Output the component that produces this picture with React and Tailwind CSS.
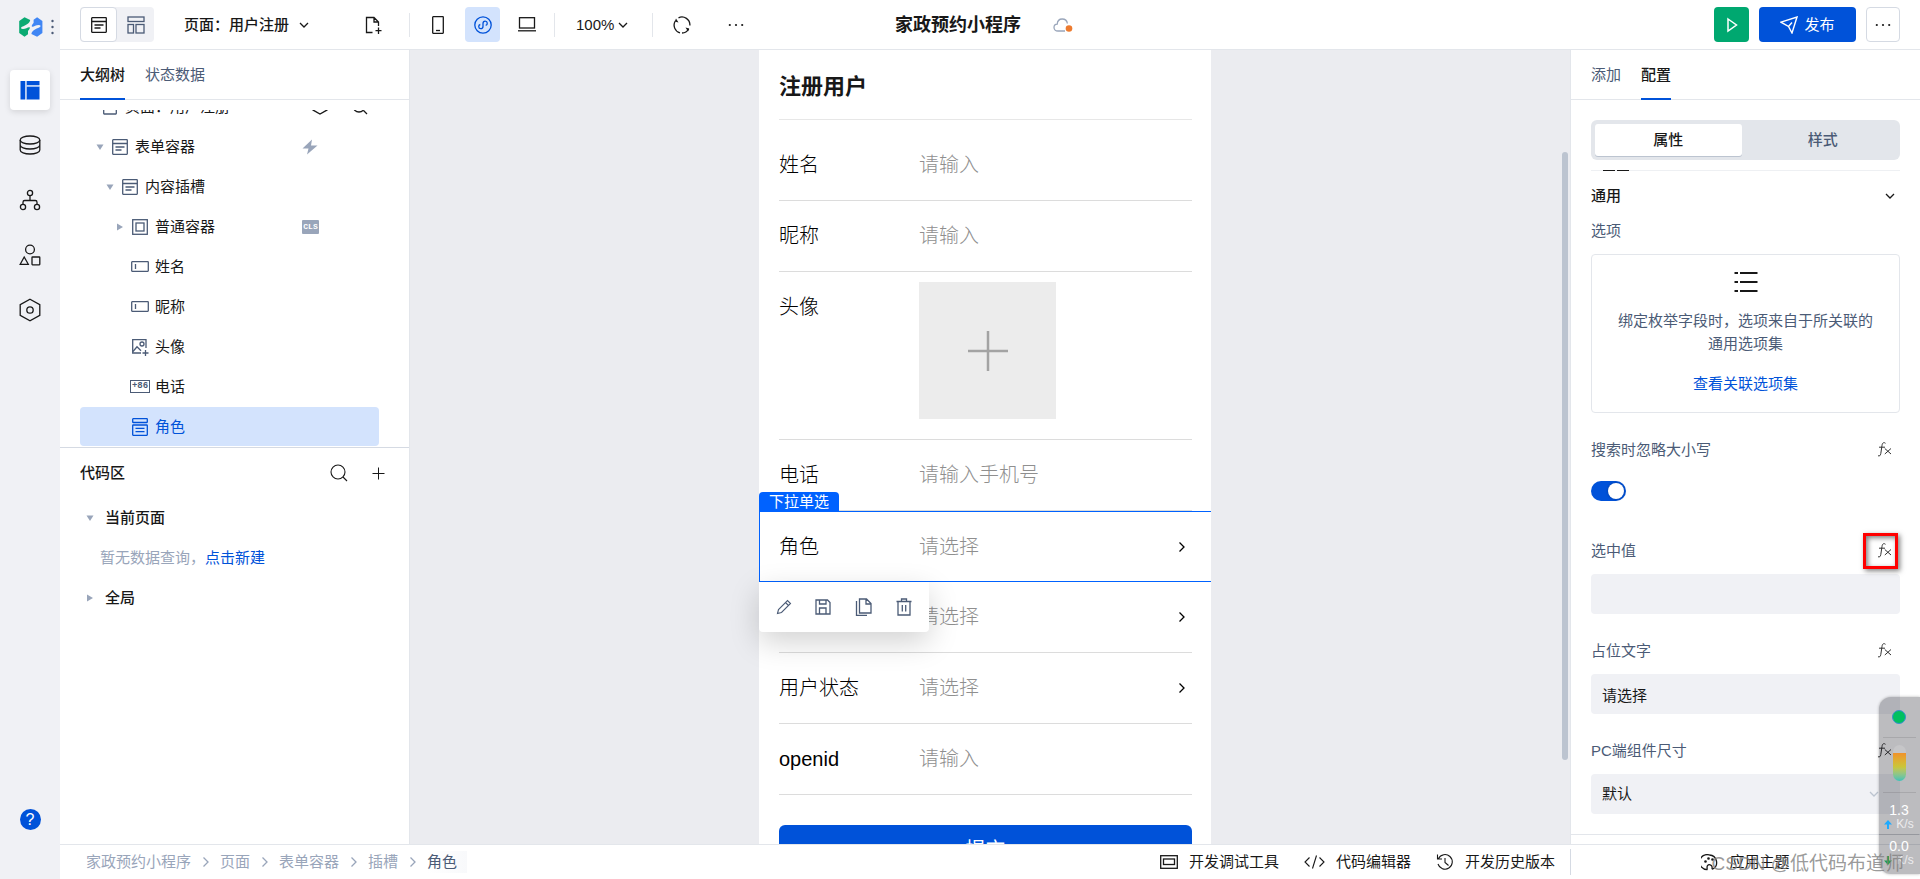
import { useState } from 'react'
import clsx from 'clsx'

const stroke = { fill: 'none', stroke: 'currentColor', strokeWidth: 1.3 }

function Svg({ size = 20, w, h, children, className, ...rest }) {
  return (
    <svg
      width={w || size}
      height={h || size}
      viewBox={`0 0 ${w || size} ${h || size}`}
      className={clsx('shrink-0', className)}
      aria-hidden="true"
      {...stroke}
      {...rest}
    >
      {children}
    </svg>
  )
}

const FormIcon = (props) => (
  <Svg size={16} {...props}>
    <rect x="0.7" y="0.7" width="14.6" height="14.6" rx="0.5" />
    <path d="M1 4.5h14M3.500 8h9M3.500 11h6" />
  </Svg>
)

const GridIcon = () => (
  <Svg size={18}>
    <rect x="1" y="1" width="16" height="4.5" />
    <rect x="1" y="8.5" width="5.5" height="8.5" />
    <rect x="9" y="8.5" width="8" height="8.5" />
  </Svg>
)

const PageIcon = () => (
  <Svg size={16}>
    <rect x="1.7" y="1" width="12.6" height="14" rx="0.5" />
  </Svg>
)

const BoxIcon = () => (
  <Svg size={16}>
    <rect x="0.7" y="0.7" width="14.6" height="14.6" />
    <rect x="4" y="4" width="8" height="8" />
  </Svg>
)

const InputIcon = () => (
  <Svg w={18} h={11}>
    <rect x="0.7" y="0.7" width="16.6" height="9.6" rx="0.5" />
    <path d="M4.5 3v5" />
  </Svg>
)

const ImageIcon = () => (
  <Svg size={18}>
    <path d="M10 15H1.7V1.7H15V10" />
    <circle cx="11" cy="6" r="2" />
    <path d="M2 13.5L6 8.8l4 4M14.5 12v6M11.5 15h6" />
  </Svg>
)

const PhoneCodeIcon = () => (
  <span className="flex h-[13px] w-5 items-center justify-center border border-[#4b5b76] font-['Liberation_Mono',monospace] text-[9px] leading-none font-bold">
    +86
  </span>
)

const SelectIcon = () => (
  <Svg w={16} h={18}>
    <rect x="0.7" y="0.7" width="14.6" height="3.8" rx="0.5" />
    <rect x="0.7" y="7" width="14.6" height="10.3" rx="0.5" />
    <path d="M3.5 10.4h9M3.5 13.6h9" />
  </Svg>
)

const Chevron = ({ size = 10, className }) => (
  <Svg w={size} h={size} className={className}>
    <path d="M1 3l4 4 4-4" />
  </Svg>
)

const ChevronRight = ({ className }) => (
  <Svg w={8} h={12} strokeWidth={1.3} className={className}>
    <path d="M1.5 1.5L6 6l-4.5 4.5" />
  </Svg>
)

const Dots = () => (
  <Svg w={16} h={4} fill="currentColor" stroke="none">
    <circle cx="1.8" cy="2" r="1.1" />
    <circle cx="8" cy="2" r="1.1" />
    <circle cx="14.2" cy="2" r="1.1" />
  </Svg>
)

const SearchIcon = () => (
  <Svg size={18} strokeWidth={1.1}>
    <circle cx="8" cy="8" r="7" />
    <path d="M13 13l4 4" />
  </Svg>
)

const PlusIcon = () => (
  <Svg size={13} strokeWidth={1}>
    <path d="M6.5 0.5v12M0.5 6.5h12" />
  </Svg>
)

// the two halves of the mark are the same shape turned by 180 degrees
const logoHalf =
  'M0.2 4L5.5 0.200l5.700 2.800C10.700 6.500 7 8 3 9.800 1.300 10.700 1.800 12 4 12c2.500 0 4.500-1.600 6.300-1.700 1.200 0 0.300 2.200-1.300 3.700V17.300L5.500 19.700 0.200 16z'

const Logo = () => (
  <Svg w={24} h={20} stroke="none">
    <path d={logoHalf} fill="#0aaa72" />
    <path d={logoHalf} fill="#4086f4" transform="rotate(180 11.800 10)" />
  </Svg>
)

const Triangle = ({ open }) => (
  <Svg size={8} fill="#99a5ba" stroke="none">
    {open ? <path d="M0.500 1.500h7L4 7z" /> : <path d="M1 0.500v7L7 4z" />}
  </Svg>
)

const FxIcon = () => (
  <Svg w={16} h={18} strokeWidth={1}>
    <path d="M8.500 2.300C6.500 0.700 5.300 2.200 5 4.500L3.800 12.500C3.500 14.600 2.300 15.600 1 14.600M2 6.200h6" />
    <path d="M7.800 7.500l6.200 5.500M14 7.500L7.800 13" />
  </Svg>
)

const railItems = [
  {
    label: '页面设计',
    active: true,
    icon: (
      <Svg size={20} fill="#0052d9" stroke="none">
        <path d="M0.500 1h4.500v18.500H0.500zM6.500 1h13v4h-13zM6.500 6.500h13v13h-13z" />
        <path d="M5 1h1.500v18.500H5zM6 5h13.500v1.500H6z" fill="#b9cff3" />
      </Svg>
    ),
  },
  {
    label: '数据源',
    icon: (
      <Svg w={22} h={20}>
        <ellipse cx="11" cy="5" rx="9.800" ry="4" />
        <path d="M1.200 5v10c0 2.200 4.400 4 9.800 4s9.800-1.800 9.800-4V5M1.200 10c0 2.200 4.400 4 9.800 4s9.800-1.800 9.800-4" />
      </Svg>
    ),
  },
  {
    label: '流程',
    icon: (
      <Svg size={22}>
        <circle cx="11" cy="4" r="2.600" />
        <circle cx="4" cy="18" r="2.600" />
        <circle cx="18" cy="18" r="2.600" />
        <path d="M11 6.600v4.900M4 15.400v-2.200q0-1.700 1.700-1.700h10.600q1.700 0 1.700 1.700v2.200" />
      </Svg>
    ),
  },
  {
    label: '素材',
    icon: (
      <Svg size={22}>
        <circle cx="11" cy="5.500" r="4.400" />
        <path d="M5.200 13L9.300 20.300H1.200z" />
        <rect x="13" y="13" width="7.800" height="7.800" rx="0.500" />
      </Svg>
    ),
  },
  {
    label: '设置',
    icon: (
      <Svg w={22} h={24}>
        <path d="M11 1.200l9.800 5.500v10.600L11 22.800l-9.800-5.500V6.700z" />
        <circle cx="11" cy="12" r="3.200" />
      </Svg>
    ),
  },
]

const tree = [
  { id: 'page', label: '页面：用户注册', pad: 'pl-1', icon: <PageIcon />, open: true, root: true },
  { id: 'form', label: '表单容器', pad: 'pl-3.5', icon: <FormIcon />, open: true, extra: 'flash' },
  { id: 'slot', label: '内容插槽', pad: 'pl-6', icon: <FormIcon />, open: true },
  { id: 'box', label: '普通容器', pad: 'pl-[34px]', icon: <BoxIcon />, open: false, extra: 'cls' },
  { id: 'name', label: '姓名', pad: 'pl-[34px]', icon: <InputIcon /> },
  { id: 'nick', label: '昵称', pad: 'pl-[34px]', icon: <InputIcon /> },
  { id: 'avatar', label: '头像', pad: 'pl-[34px]', icon: <ImageIcon /> },
  { id: 'tel', label: '电话', pad: 'pl-[34px]', icon: <PhoneCodeIcon /> },
  { id: 'role', label: '角色', pad: 'pl-[34px]', icon: <SelectIcon /> },
]

function Rail() {
  return (
    <nav className="flex w-[60px] shrink-0 flex-col items-center bg-[#f0f1f5] pb-[49px]">
      <div className="flex h-[54px] w-full items-center gap-2 pl-[19px]">
        <Logo />
        <Svg w={3} h={16} fill="#4b5b76" stroke="none">
          <circle cx="1.500" cy="2" r="1.200" />
          <circle cx="1.500" cy="8" r="1.200" />
          <circle cx="1.500" cy="14" r="1.200" />
        </Svg>
      </div>
      <div className="mt-4 flex flex-col gap-[15px]">
        {railItems.map((item) => (
          <button
            key={item.label}
            aria-label={item.label}
            className={clsx(
              'flex size-10 items-center justify-center rounded',
              item.active && 'bg-white shadow-[0_2px_6px_rgba(0,0,0,0.12)]'
            )}
          >
            {item.icon}
          </button>
        ))}
      </div>
      <button
        aria-label="帮助"
        className="mt-auto flex size-[21px] items-center justify-center rounded-full bg-[#0052d9] text-base leading-none text-white"
      >
        ?
      </button>
    </nav>
  )
}

const Divider = () => <span className="h-6 w-px bg-[#e3e6eb]" />

function TopBar() {
  return (
    <header className="flex h-[50px] shrink-0 items-center border-b border-[#e3e6eb] px-5">
      <div className="flex flex-1 items-center">
        <div className="flex h-[35px] w-[74px] rounded bg-[#f0f1f5]">
          <button aria-label="大纲" className="flex w-[37px] items-center justify-center rounded border border-[#d5dae3] bg-white">
            <FormIcon />
          </button>
          <button aria-label="布局" className="flex w-[37px] items-center justify-center text-[#4b5b76]">
            <GridIcon />
          </button>
        </div>
        <button className="ml-[30px] flex items-center gap-2.5 font-medium">
          页面：用户注册
          <Chevron />
        </button>
        <button aria-label="新建页面" className="ml-[55px]">
          <Svg size={18}>
            <path d="M8.500 16.500h-6v-15h7.500l4.500 4.500v4M10 1.500V6H14.500M14.500 11.500v6.500M11.500 14.700h6" />
          </Svg>
        </button>
        <div className="ml-[27px] flex items-center">
          <Divider />
          <button aria-label="手机" className="flex h-[35px] w-[55px] items-center justify-center">
            <Svg w={12} h={18}>
              <rect x="0.700" y="0.700" width="10.600" height="16.600" rx="0.500" />
              <path d="M4 14.500h4" />
            </Svg>
          </button>
          <button aria-label="小程序" className="flex size-[35px] items-center justify-center rounded bg-[#d3e3fd] text-[#0052d9]">
            <Svg size={18}>
              <circle cx="9" cy="9" r="8.200" />
              <path d="M6.300 8.500c-2.300 0.500-2 4.200 0.400 4.200 1.600 0 2.300-1.200 2.300-2.500V7.500C9 6.200 9.900 5.200 11.200 5.200c2.500 0 2.800 3.700 0.500 4.200" />
            </Svg>
          </button>
          <button aria-label="电脑" className="flex h-[35px] w-[54px] items-center justify-center">
            <Svg w={18} h={15}>
              <rect x="1.500" y="0.700" width="15" height="10.300" />
              <path d="M0 13.800h18" />
            </Svg>
          </button>
          <Divider />
          <button className="ml-[21px] mr-6 flex items-center gap-1">
            100%
            <Chevron />
          </button>
          <Divider />
          <button aria-label="刷新" className="ml-5">
            <Svg size={18}>
              <path d="M2.300 5A8 8 0 0 0 7 16.900M5.500 1.800A8 8 0 0 1 16.900 9.500M15.700 13A8 8 0 0 1 9 17M1.300 7" />
              <path d="M1.800 5.500L3 2.500l2.500 4zM16.200 12.500L15 15.500l-2.500-4z" fill="currentColor" stroke="none" />
            </Svg>
          </button>
          <button aria-label="更多" className="ml-[37px]">
            <Dots />
          </button>
        </div>
      </div>
      <div className="flex items-center gap-5">
        <h1 className="text-[18px] font-bold">家政预约小程序</h1>
        <div className="relative flex w-11 justify-center text-[#99a5ba]">
          <Svg w={20} h={14}>
            <path d="M12 13H5C2.500 13 1 11.400 1 9.500 1 7.600 2.400 6.300 4.200 6.200 4.400 3 6.500 1 9.200 1c2.800 0 4.800 1.900 5.200 4.500" />
            <circle cx="16" cy="10.500" r="3.300" fill="#ed7b2f" stroke="none" />
          </Svg>
        </div>
      </div>
      <div className="flex flex-1 justify-end gap-2.5">
        <button aria-label="预览" className="flex size-[35px] items-center justify-center rounded bg-[#00a870] text-white">
          <Svg w={12} h={16} strokeWidth={1.500}>
            <path d="M2 2l8.500 6L2 14z" />
          </Svg>
        </button>
        <button className="flex h-[35px] w-[97px] items-center justify-center gap-1.5 rounded bg-[#0052d9] text-white">
          <Svg size={18} strokeWidth={1.400}>
            <path d="M1 6.200L17 1l-5 16-3.500-6.500zM8.500 10.500l3.500-4" />
          </Svg>
          发布
        </button>
        <button aria-label="更多操作" className="flex h-[35px] w-[34px] items-center justify-center rounded border border-[#d5dae3]">
          <Dots />
        </button>
      </div>
    </header>
  )
}

function Tabs({ items, active }) {
  return (
    <div role="tablist" className="flex h-[50px] shrink-0 gap-5 border-b border-[#e3e6eb] px-5">
      {items.map((item) => (
        <button
          key={item}
          role="tab"
          aria-selected={item === active}
          className={clsx(
            '-mb-px border-b-2 pt-0.5',
            item === active ? 'border-[#0052d9] font-medium' : 'border-transparent text-[#4b5b76]'
          )}
        >
          {item}
        </button>
      ))}
    </div>
  )
}

function TreeRow({ node, selected, onSelect }) {
  return (
    <li className="h-10 shrink-0 pb-px">
      <div
        onClick={() => onSelect(node.id)}
        className={clsx(
          'flex h-[39px] items-center rounded pr-[11px]',
          node.pad,
          selected && 'bg-[#d3e3fd] text-[#0052d9]'
        )}
      >
        <span className="mr-1 flex w-3 justify-center">
          {node.open !== undefined && <Triangle open={node.open} />}
        </span>
        <span className={clsx('mr-[5px] flex w-5 justify-center', !selected && 'text-[#4b5b76]')}>{node.icon}</span>
        <span className="flex-1">{node.label}</span>
        {node.extra === 'flash' && (
          <Svg w={16} h={16} fill="#99a5ba" stroke="none" className="mr-[50px]">
            <path d="M10 0.500L0.500 9.500H6.500L5 15.500 15.500 6.500H9z" />
          </Svg>
        )}
        {node.extra === 'cls' && (
          <span className="mr-[49px] flex h-3.5 w-[17px] items-center justify-center rounded-[1px] bg-[#99a5ba] font-['Liberation_Mono',monospace] text-[8px] leading-none font-bold text-white">
            CLS
          </span>
        )}
        {node.root && (
          <span className="flex items-center gap-6">
            <Svg size={16}>
              <path d="M8 1l7 4v6l-7 4-7-4V5z" />
            </Svg>
            <Svg size={16}>
              <circle cx="7" cy="7" r="6" />
              <path d="M11.500 11.500l3.500 3.500" />
            </Svg>
          </span>
        )}
      </div>
    </li>
  )
}

function LeftPanel() {
  const [selected, setSelected] = useState('role')

  return (
    <aside className="flex w-[350px] shrink-0 flex-col border-r border-[#e3e6eb]">
      <Tabs items={['大纲树', '状态数据']} active="大纲树" />
      <ul className="mt-2.5 flex h-[337px] shrink-0 flex-col justify-end overflow-hidden pr-[30px] pl-5">
        {tree.map((node) => (
          <TreeRow key={node.id} node={node} selected={node.id === selected} onSelect={setSelected} />
        ))}
      </ul>
      <section className="border-t border-[#d5dae3]">
        <div className="flex h-[50px] items-center px-5">
          <h2 className="flex-1 font-medium">代码区</h2>
          <button aria-label="搜索" className="mr-6">
            <SearchIcon />
          </button>
          <button aria-label="新增" className="mr-1">
            <PlusIcon />
          </button>
        </div>
        <div className="flex h-10 items-center gap-[11px] pl-[26px] font-medium">
          <Triangle open />
          当前页面
        </div>
        <p className="flex h-10 items-center pl-10 text-[#99a5ba]">
          暂无数据查询，
          <a href="#new" className="text-[#0052d9]">
            点击新建
          </a>
        </p>
        <div className="flex h-10 items-center gap-[11px] pl-[26px] font-medium">
          <Triangle />
          全局
        </div>
      </section>
    </aside>
  )
}

function Field({ id, label, placeholder, picker }) {
  return (
    <div className="flex h-[71px] items-center border-b border-[#dcdcdc]">
      <label htmlFor={id} className="w-[140px] shrink-0">
        {label}
      </label>
      <input
        id={id}
        readOnly={picker}
        placeholder={placeholder}
        className="min-w-0 flex-1 bg-transparent outline-none placeholder:text-[#8f8f8f]"
      />
      {picker && <ChevronRight className="mr-1.5" />}
    </div>
  )
}

function Canvas() {
  return (
    <main className="flex min-w-0 flex-1 overflow-hidden bg-[#ebecf0]">
      <div className="flex flex-1 justify-center">
        <div className="h-max w-[452px] bg-white pr-[19px] pb-10 pl-5 text-xl leading-[30px] font-light text-black">
          <h2 className="mb-2.5 flex h-[70px] items-center border-b border-[#e7e7e7] pt-1 text-[22px] font-bold text-[#181818]">
            注册用户
          </h2>
          <Field id="f-name" label="姓名" placeholder="请输入" />
          <Field id="f-nick" label="昵称" placeholder="请输入" />
          <div className="flex h-[168px] border-b border-[#dcdcdc] pt-2.5">
            <span className="w-[140px] pt-2.5">头像</span>
            <button aria-label="上传头像" className="flex size-[137px] items-center justify-center bg-[#ececec] text-[#a3a3a3]">
              <Svg size={40} strokeWidth={2.500}>
                <path d="M20 0v40M0 20h40" />
              </Svg>
            </button>
          </div>
          <Field id="f-tel" label="电话" placeholder="请输入手机号" />
          <div className="relative -mr-[19px] -ml-5 flex h-[71px] items-center border border-r-0 border-[#0062ff] pr-[19px] pl-[19px]">
            <label htmlFor="f-role" className="w-[140px] shrink-0">
              角色
            </label>
            <input
              id="f-role"
              readOnly
              placeholder="请选择"
              className="min-w-0 flex-1 bg-transparent outline-none placeholder:text-[#8f8f8f]"
            />
            <ChevronRight className="mr-1.5" />
            <span className="absolute bottom-full -left-px flex h-5 w-20 items-center justify-center rounded-t bg-[#0062ff] text-[15px] font-normal text-white">
              下拉单选
            </span>
            <div className="absolute top-full -left-px z-10 mt-px flex h-[50px] w-[170px] items-center justify-around rounded-b bg-white px-[5px] text-[#4b5b76] shadow-[0_10px_30px_rgba(0,0,0,0.18)]">
              <button aria-label="编辑">
                <Svg size={16} strokeWidth={1.100}>
                  <path d="M1.500 14.500l1-4L11.500 1.500l3 3L5.500 13.500zM9.500 3.500l3 3" />
                </Svg>
              </button>
              <button aria-label="保存">
                <Svg size={16}>
                  <path d="M1 1h11.500L15 3.500V15H1zM4.500 1v4H11V1M4.500 15V9H11v6" />
                </Svg>
              </button>
              <button aria-label="复制">
                <Svg size={18}>
                  <path d="M4.500 1h7l4.500 4.500V15H4.500zM11 1v5h5M1.500 3v14.500H12" />
                </Svg>
              </button>
              <button aria-label="删除">
                <Svg w={16} h={18}>
                  <path d="M0.500 3.500h15M2 3.500V17h12V3.500M5.500 3.500V1h5v2.500M6.300 7v6.500M9.700 7v6.500" />
                </Svg>
              </button>
            </div>
          </div>
          <Field id="f-kind" label="" placeholder="请选择" picker />
          <Field id="f-status" label="用户状态" placeholder="请选择" picker />
          <Field id="f-openid" label="openid" placeholder="请输入" />
          <button className="mt-[30px] h-[50px] w-full rounded-md bg-[#0052d9] font-normal text-white">提交</button>
        </div>
      </div>
      <div className="flex w-2.5 flex-col px-0.5">
        <span className="mt-[102px] mb-[84px] flex-1 rounded-full bg-[#bcc4d0]" />
      </div>
    </main>
  )
}

function PropLabel({ htmlFor, children, marked }) {
  return (
    <div className="mb-2 flex h-[30px] items-center justify-between pr-[7px] text-[#4b5b76]">
      <label htmlFor={htmlFor}>{children}</label>
      <button aria-label="绑定表达式" className="relative text-[#333]">
        <FxIcon />
        {marked && (
          <span className="absolute -top-[9px] -right-[5px] h-9 w-[35px] border-3 border-[#ff0000] shadow-[2px_2px_5px_rgba(0,0,0,0.5),inset_2px_2px_5px_rgba(0,0,0,0.5)]" />
        )}
      </button>
    </div>
  )
}

function RightPanel() {
  const [ignoreCase, setIgnoreCase] = useState(true)

  return (
    <aside className="flex w-[350px] shrink-0 flex-col overflow-hidden border-l border-[#e3e6eb]">
      <Tabs items={['添加', '配置']} active="配置" />
      <div className="flex min-h-0 flex-col px-5 pt-5">
        <div className="flex h-10 shrink-0 gap-2 rounded-md bg-[#e3e6eb] p-1 font-medium">
          <button className="flex-1 rounded-[3px] bg-white shadow-[0_1px_0_#bcc4d0]">属性</button>
          <button className="flex-1 text-[#4b5b76]">样式</button>
        </div>
        <div className="mt-2.5 flex h-px gap-0.5 bg-[#eef0f3] pl-3">
          <span className="w-3 bg-[#181818]" />
          <span className="w-3 bg-[#181818]" />
        </div>
        <button className="flex h-[49px] items-center justify-between pr-[5px] font-medium">
          通用
          <Chevron />
        </button>
        <h3 className="mb-3 text-[#4b5b76]">选项</h3>
        <div className="mb-[22px] flex h-[159px] flex-col items-center rounded border border-[#e3e6eb] pt-4 text-center text-[#4b5b76]">
          <Svg w={24} h={22} strokeWidth={2} className="text-[#181818]">
            <path d="M0.500 2H4M6 2h17.500M0.500 11H4M6 11h17.500M0.500 20H4M6 20h17.500" />
          </Svg>
          <p className="mt-4 px-6 leading-[23px]">绑定枚举字段时，选项来自于所关联的通用选项集</p>
          <a href="#options" className="mt-[18px] text-[#0052d9]">
            查看关联选项集
          </a>
        </div>

        <PropLabel htmlFor="p-case">搜索时忽略大小写</PropLabel>
        <div className="mb-[27px] flex h-9 items-center">
          <span className="relative flex">
            <input
              id="p-case"
              type="checkbox"
              role="switch"
              checked={ignoreCase}
              onChange={(e) => setIgnoreCase(e.target.checked)}
              className="peer h-5 w-[35px] appearance-none rounded-full bg-[#bcc4d0] checked:bg-[#0052d9]"
            />
            <span className="pointer-events-none absolute top-0.5 left-0.5 size-4 rounded-full bg-white shadow-[0_0_3px_rgba(0,0,0,0.3)] peer-checked:left-[17px]" />
          </span>
        </div>

        <PropLabel htmlFor="p-value" marked>
          选中值
        </PropLabel>
        <input id="p-value" className="mb-[22px] h-10 rounded bg-[#f0f1f5] px-[11px]" />

        <PropLabel htmlFor="p-hint">占位文字</PropLabel>
        <input id="p-hint" defaultValue="请选择" className="mb-[22px] h-10 rounded bg-[#f0f1f5] px-[11px]" />

        <PropLabel htmlFor="p-size">PC端组件尺寸</PropLabel>
        <div className="flex items-center rounded bg-[#f0f1f5] pr-[21px]">
          <select id="p-size" className="h-10 flex-1 appearance-none px-[11px]">
            <option>默认</option>
          </select>
          <Chevron className="text-[#bcc4d0]" />
        </div>
      </div>
      <div className="mt-5 border-t border-[#e3e6eb]" />
    </aside>
  )
}

function Footer() {
  const crumbs = ['家政预约小程序', '页面', '表单容器', '插槽', '角色']

  return (
    <footer className="flex h-[35px] shrink-0 border-t border-[#e3e6eb]">
      <ol className="flex flex-1 items-center pl-[26px] text-[#99a5ba]">
        {crumbs.map((crumb, i) => (
          <li key={crumb} className="flex items-center">
            {i > 0 && <ChevronRight className="mr-2.5 ml-[11px]" />}
            <a
              href="#crumb"
              className={clsx(
                i === crumbs.length - 1 && 'bg-gradient-to-r from-white to-[#f8f9fb] pr-2.5 text-[#4b5b76]'
              )}
            >
              {crumb}
            </a>
          </li>
        ))}
      </ol>
      <div className="flex items-center gap-[25px] pr-[15px]">
        <button className="flex items-center gap-[11px]">
          <Svg w={18} h={14}>
            <rect x="0.700" y="0.700" width="16.600" height="12.600" />
            <rect x="3.500" y="4" width="11" height="5.500" />
          </Svg>
          开发调试工具
        </button>
        <button className="flex items-center gap-[11px]">
          <Svg w={21} h={14} strokeWidth={1.100}>
            <path d="M5.500 2.500L1 7l4.500 4.500M15.500 2.500L20 7l-4.500 4.500M12.500 0.500l-4 13" />
          </Svg>
          代码编辑器
        </button>
        <button className="flex items-center gap-[11px]">
          <Svg size={18} strokeWidth={1.100}>
            <path d="M2.500 5.500A7.300 7.300 0 1 1 2 11M1.500 1.500v4.500H6M9 5v4.500l3.500 3" />
          </Svg>
          开发历史版本
        </button>
      </div>
      <div className="my-1 flex w-[350px] shrink-0 items-center justify-center border-l border-[#d5dae3]">
        <button className="flex items-center gap-[11px]">
          <Svg size={17}>
            <path d="M8.500 1A7.500 7.500 0 1 0 6 15.600c0.500-1.500-0.500-2.500 0.500-4 1.500-2 4-0.500 4.500 1 0.400 1.300-0.500 2.400 0.800 2.400A7.500 7.500 0 0 0 8.500 1z" />
            <circle cx="4.500" cy="7.500" r="0.700" />
            <circle cx="7.500" cy="4.500" r="0.700" />
            <circle cx="11.500" cy="5.500" r="0.700" />
          </Svg>
          应用主题
        </button>
      </div>
    </footer>
  )
}

function Speed({ value, color, down }) {
  return (
    <div className="flex flex-col items-center">
      <span className="text-sm leading-[15px]">{value}</span>
      <span className="flex items-center gap-1 text-xs leading-3 text-white/75">
        <Svg w={8} h={9} fill={color} stroke="none" className={clsx(down && 'rotate-180')}>
          <path d="M4 0l4 4.500H5V9H3V4.500H0z" />
        </Svg>
        K/s
      </span>
    </div>
  )
}

// floating system monitor docked to the right edge of the screen
function Monitor() {
  return (
    <div className="absolute right-0 bottom-[5px] flex h-[177px] w-[41px] flex-col items-center rounded-l-xl bg-[#10101a]/28 pt-[13px] pr-px text-white shadow-[0_0_3px_rgba(0,0,0,0.3)]">
      <span className="size-[14px] rounded-full border border-[#3a8fd0] bg-[#00c060]" />
      <span className="mt-[13px] h-px w-[33px] bg-black/10" />
      <span className="mt-[7px] flex h-9 w-[13px] items-end overflow-hidden rounded-full bg-white/15">
        <span className="h-7 w-full bg-gradient-to-b from-[#f0922b] via-[#c9c63a] to-[#38c1b8]" />
      </span>
      <span className="mt-[11px] mb-2.5 h-px w-[33px] bg-black/10" />
      <Speed value="1.3" color="#1eaaff" />
      <span className="mt-1 mb-1 h-px w-full bg-black/10" />
      <Speed value="0.0" color="#1fa04a" down />
    </div>
  )
}

export default function App() {
  return (
    <div className="relative flex h-screen overflow-hidden bg-white font-['Liberation_Sans','Noto_Sans_CJK_SC',sans-serif] text-[15px] leading-[22px] text-[#181818]">
      <Rail />
      <div className="flex min-w-0 flex-1 flex-col">
        <TopBar />
        <div className="flex min-h-0 flex-1">
          <LeftPanel />
          <Canvas />
          <RightPanel />
        </div>
        <Footer />
      </div>
      <Monitor />
      <span className="pointer-events-none absolute right-4 bottom-1 text-[19px] text-[#808080]/80">
        CSDN @低代码布道师
      </span>
    </div>
  )
}
